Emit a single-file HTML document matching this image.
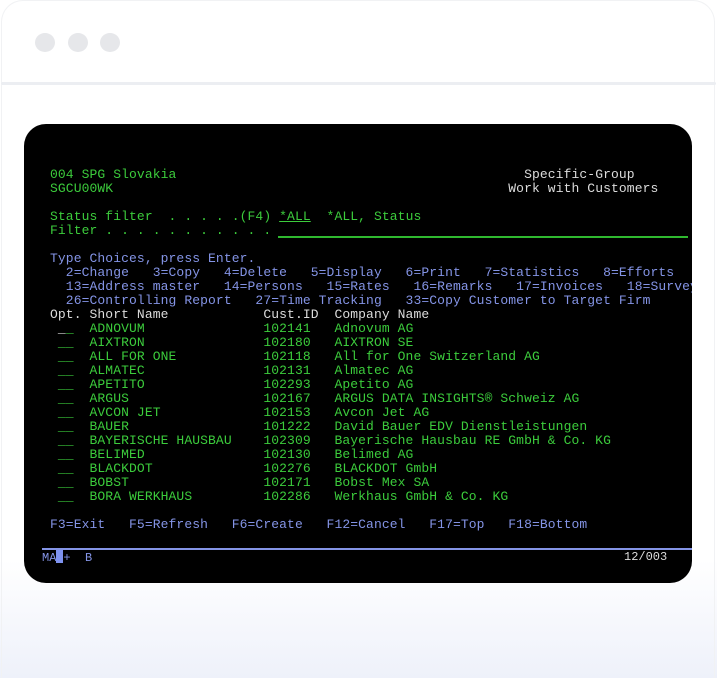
<!DOCTYPE html>
<html><head><meta charset="utf-8"><style>
html,body{margin:0;padding:0;width:717px;height:678px;overflow:hidden;background:#fff;}
body{position:relative;background:linear-gradient(#fff 0,#fff 560px,#eef1fa 678px);}
.frame{position:absolute;left:1px;top:0;width:714px;height:678px;border-radius:22px 22px 0 0;border:1px solid #f1f2f4;border-bottom:none;box-sizing:border-box;}
.sep{position:absolute;left:1px;top:82px;width:715px;height:3px;background:#eceef2;border-radius:2px;}
.dot{position:absolute;top:33px;width:20px;height:19px;border-radius:50%;background:#e6e7ea;}
.term{position:absolute;left:24px;top:124px;width:668px;height:459px;background:#000;border-radius:22px;overflow:hidden;}
pre{position:absolute;left:26px;top:44px;margin:0;font-family:"Liberation Mono",monospace;font-size:13px;letter-spacing:0.1px;line-height:14px;color:#3ccc3c;white-space:pre;}
.b{color:#8494e6}.w{color:#dcdcdc}.g{color:#3ccc3c}
u{text-decoration:underline;}
.fl{position:absolute;left:254px;top:112px;width:410px;height:1.5px;background:#2fb82f;}
.bar{position:absolute;left:18px;top:424px;width:650px;height:2px;background:#8494e6;}
.st{position:absolute;left:18px;top:426px;font-family:"Liberation Mono",monospace;font-size:12px;color:#8494e6;line-height:14px;white-space:pre;}
.cur{display:inline-block;width:7px;height:13px;background:#7f93f0;vertical-align:-2px;}
.st2{position:absolute;left:600px;top:426px;font-family:"Liberation Mono",monospace;font-size:12px;color:#dcdcdc;line-height:14px;}
</style></head><body>
<div class="frame"></div>
<div class="dot" style="left:35px"></div><div class="dot" style="left:68px"></div><div class="dot" style="left:100px"></div>
<div class="sep"></div>
<div class="term">
<pre><span class="g">004 SPG Slovakia                                            </span><span class="w">Specific-Group</span>
<span class="g">SGCU00WK                                                  </span><span class="w">Work with Customers</span>

Status filter  . . . . .(F4) <u>*ALL</u>  *ALL, Status
Filter . . . . . . . . . . .

<span class="b">Type Choices, press Enter.
  2=Change   3=Copy   4=Delete   5=Display   6=Print   7=Statistics   8=Efforts
  13=Address master   14=Persons   15=Rates   16=Remarks   17=Invoices   18=Survey
  26=Controlling Report   27=Time Tracking   33=Copy Customer to Target Firm</span>
<span class="w">Opt. Short Name            Cust.ID  Company Name</span>
 <span class="w">_</span>_  ADNOVUM               102141   Adnovum AG
 __  AIXTRON               102180   AIXTRON SE
 __  ALL FOR ONE           102118   All for One Switzerland AG
 __  ALMATEC               102131   Almatec AG
 __  APETITO               102293   Apetito AG
 __  ARGUS                 102167   ARGUS DATA INSIGHTS® Schweiz AG
 __  AVCON JET             102153   Avcon Jet AG
 __  BAUER                 101222   David Bauer EDV Dienstleistungen
 __  BAYERISCHE HAUSBAU    102309   Bayerische Hausbau RE GmbH &amp; Co. KG
 __  BELIMED               102130   Belimed AG
 __  BLACKDOT              102276   BLACKDOT GmbH
 __  BOBST                 102171   Bobst Mex SA
 __  BORA WERKHAUS         102286   Werkhaus GmbH &amp; Co. KG

<span class="b">F3=Exit   F5=Refresh   F6=Create   F12=Cancel   F17=Top   F18=Bottom</span></pre>
<div class="fl"></div>
<div class="bar"></div>
<div class="st">MA<span class="cur"></span>+  B</div>
<div class="st2">12/003</div>
</div>
</body></html>
